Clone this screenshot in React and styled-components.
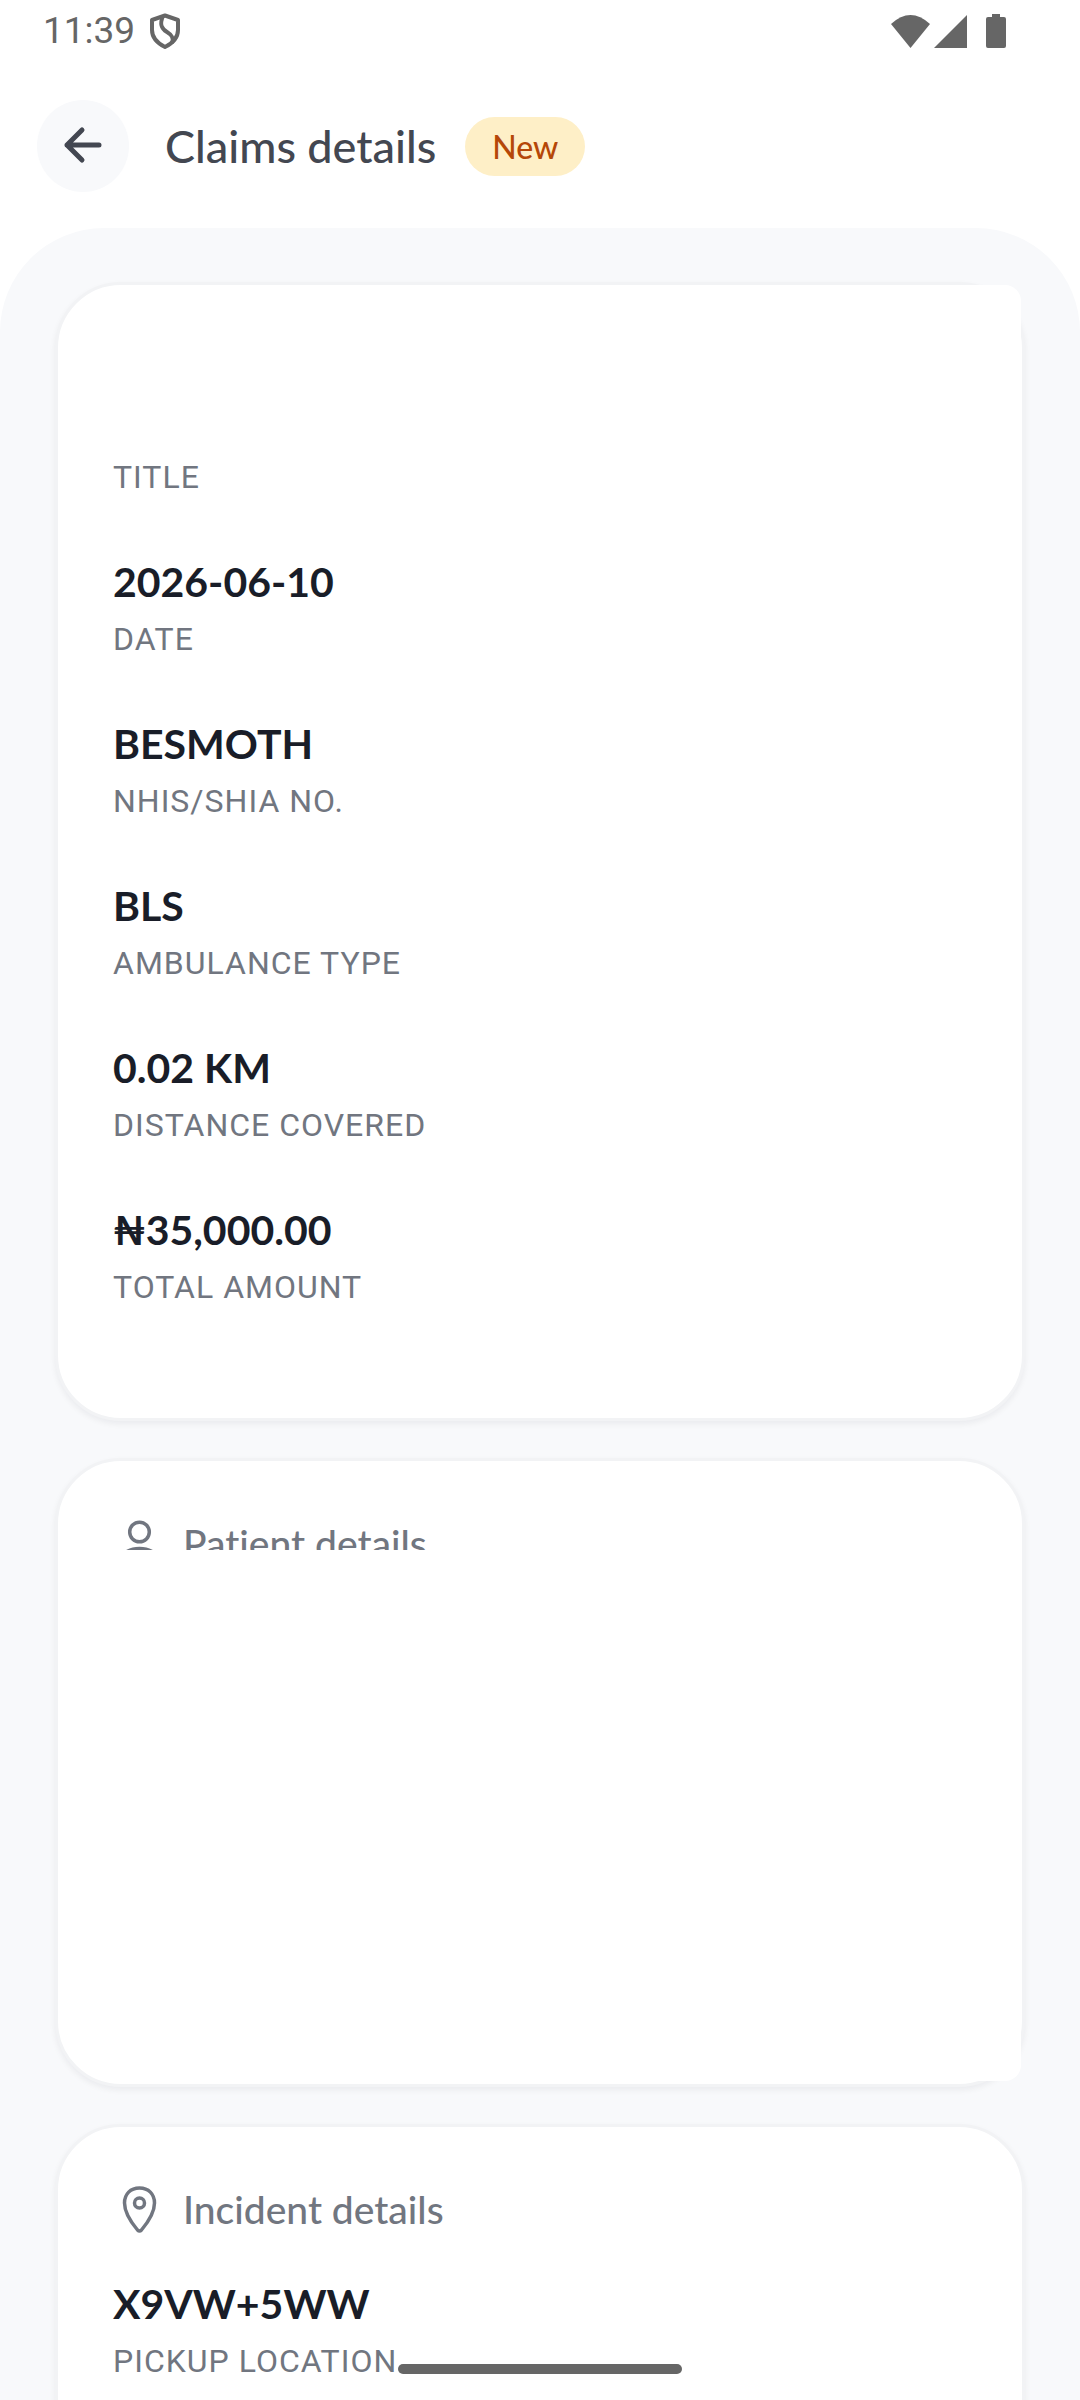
import React from 'react'
import styled, { createGlobalStyle, ThemeProvider } from 'styled-components'

const theme = {
  colors: {
    surface: '#ffffff',
    page: '#f8f9fb',
    border: '#f2f3f5',
    heading: '#434751',
    value: '#191d28',
    label: '#717680',
    system: '#666666',
    badge: '#feefc7',
    badgeText: '#b54708',
  },
  fonts: {
    brand: 'Lato, "Open Sans", sans-serif',
    body: 'Roboto, "Liberation Sans", sans-serif',
  },
}

const GlobalStyle = createGlobalStyle`
  * {
    box-sizing: border-box;
  }
  body {
    margin: 0;
    background-color: ${theme.colors.surface};
    font-family: ${theme.fonts.body};
    font-variant-ligatures: none;
  }
`
const Screen = styled.div`
  display: flex;
  flex-direction: column;
  height: 100vh;
  overflow: hidden;
`
const StatusBar = styled.div`
  display: flex;
  flex: none;
  align-items: center;
  height: 64px;
  padding: 0 74px 2px 43px;
  color: ${(props) => props.theme.colors.system};
  font-size: 37px;
  line-height: 62px;

  svg {
    display: block;
    fill: currentColor;
  }
`
const Clock = styled.time`
  margin-right: 14px;
`
const StatusIcons = styled.div`
  display: flex;
  align-items: center;
  margin-left: auto;
  gap: 4px;
`
const Header = styled.header`
  display: flex;
  flex: none;
  align-items: center;
  height: 164px;
  padding: 0 37px;
`
const BackButton = styled.button`
  display: grid;
  place-items: center;
  width: 92px;
  height: 92px;
  margin-right: 36px;
  padding: 0;
  border: 0;
  border-radius: 50%;
  background-color: ${(props) => props.theme.colors.page};
  color: ${(props) => props.theme.colors.heading};
  cursor: pointer;
`
const Title = styled.h1`
  margin: 0 29px 0 0;
  color: ${(props) => props.theme.colors.heading};
  font-family: ${(props) => props.theme.fonts.brand};
  font-size: 45px;
  font-weight: 500;
  line-height: 60px;
`
const Badge = styled.span`
  padding: 0 27px;
  border-radius: 30px;
  background-color: ${(props) => props.theme.colors.badge};
  color: ${(props) => props.theme.colors.badgeText};
  font-family: ${(props) => props.theme.fonts.brand};
  font-size: 32px;
  font-weight: 500;
  line-height: 59px;
`
const Content = styled.main`
  display: flex;
  flex: 1;
  flex-direction: column;
  gap: 37px;
  min-height: 0;
  padding: 54px 55px 0;
  border-radius: 104px 104px 0 0;
  background-color: ${(props) => props.theme.colors.page};
  overflow: hidden;
`
const Card = styled.section`
  position: relative;
  flex: none;
  padding: ${(props) => (props.$summary ? '168px' : '55px')} 55px
    ${(props) => (props.$roomy ? '107px' : '55px')};
  border: 3px solid ${(props) => props.theme.colors.border};
  border-radius: 66px;
  background-color: ${(props) => props.theme.colors.surface};
  box-shadow: 0 3px 6px rgba(16, 24, 40, 0.06);
`
// White sheet that pokes out over one rounded corner of its card
const Cover = styled.div`
  position: absolute;
  right: 1px;
  width: 240px;
  height: 60px;
  background-color: ${(props) => props.theme.colors.surface};
  ${(props) =>
    props.$corner === 'top'
      ? 'top: 0; border-top-right-radius: 16px;'
      : 'bottom: 3px; border-bottom-right-radius: 16px;'}
`
const Details = styled.dl`
  display: flex;
  flex-direction: column;
  gap: 48px;
  margin: 0;
`
const Detail = styled.div`
  display: flex;
  flex-direction: column-reverse;
`
const Label = styled.dt`
  color: ${(props) => props.theme.colors.label};
  font-size: 32px;
  letter-spacing: 1px;
  line-height: 48px;
  text-transform: uppercase;
`
const Value = styled.dd`
  margin: 0;
  color: ${(props) => props.theme.colors.value};
  font-family: ${(props) => props.theme.fonts.brand};
  font-size: 41px;
  font-weight: 700;
  line-height: 66px;
`
const SectionTitle = styled.h2`
  display: flex;
  align-items: center;
  gap: 18px;
  margin: 0 0 34px;
  color: ${(props) => props.theme.colors.label};
  font-family: ${(props) => props.theme.fonts.brand};
  font-size: 39px;
  font-weight: 500;
  line-height: 55px;

  svg {
    flex: none;
    fill: none;
    stroke: currentColor;
  }
`
const Clip = styled.div`
  height: 34px;
  margin-bottom: 479px;
  overflow: hidden;
`
const HomeIndicator = styled.div`
  position: fixed;
  bottom: 26px;
  left: 50%;
  width: 284px;
  height: 10px;
  border-radius: 5px;
  background-color: ${(props) => props.theme.colors.system};
  transform: translateX(-50%);
`

function ShieldIcon() {
  return (
    <svg width="32" height="38" viewBox="0 0 32 38" aria-hidden="true">
      <path
        d="M16 3.500 29 8v10c0 8-6 13.500-13 17-7-3.500-13-9-13-17V8z"
        fill="none"
        stroke="currentColor"
        strokeWidth="4"
        strokeLinejoin="round"
      />
      <path
        d="M14 4c-4 9-1 13 4 16s7 6 5 11"
        fill="none"
        stroke="currentColor"
        strokeWidth="4"
      />
    </svg>
  )
}

function ArrowIcon() {
  return (
    <svg width="44" height="44" viewBox="0 0 44 44" aria-hidden="true">
      <path
        d="M38 21H6M21 6 6 21l15 15"
        fill="none"
        stroke="currentColor"
        strokeWidth="5"
        strokeLinecap="round"
        strokeLinejoin="round"
      />
    </svg>
  )
}

function PersonIcon() {
  return (
    <svg
      width="52"
      height="52"
      viewBox="0 0 52 52"
      strokeWidth="3.5"
      aria-hidden="true"
    >
      <circle cx="26.500" cy="14" r="9.800" />
      <ellipse cx="26.500" cy="40" rx="17" ry="9.500" />
    </svg>
  )
}

function PinIcon() {
  return (
    <svg
      width="52"
      height="52"
      viewBox="0 0 52 52"
      strokeWidth="3.5"
      aria-hidden="true"
    >
      <path d="M26.500 4c-9 0-15 6-15 15 0 10 8 21 13 27q2 2 4 0c5-6 13-17 13-27 0-9-6-15-15-15z" />
      <circle cx="26.500" cy="19" r="5" />
    </svg>
  )
}

const summary = [
  ['Title', ''],
  ['Date', '2026-06-10'],
  ['NHIS/SHIA No.', 'BESMOTH'],
  ['Ambulance type', 'BLS'],
  ['Distance covered', '0.02 KM'],
  ['Total amount', '₦35,000.00'],
]

const incident = [['Pickup location', 'X9VW+5WW']]

function DetailList({ items }) {
  return (
    <Details>
      {items.map(([label, value]) => (
        <Detail key={label}>
          <Label>{label}</Label>
          {value && <Value>{value}</Value>}
        </Detail>
      ))}
    </Details>
  )
}

function App() {
  return (
    <ThemeProvider theme={theme}>
      <GlobalStyle />
      <Screen>
        <StatusBar>
          <Clock>11:39</Clock>
          <ShieldIcon />
          <StatusIcons>
            <svg width="39" height="33" viewBox="0 0 39 33" aria-hidden="true">
              <path d="M0 9Q19.500-9 39 9L19.500 33z" />
            </svg>
            <svg width="33" height="33" viewBox="0 0 33 33" aria-hidden="true">
              <path d="M33 0v33H0z" />
            </svg>
            <svg width="35" height="34" viewBox="0 0 35 34" aria-hidden="true">
              <path d="M21 0h8v3h4q2 0 2 2v27q0 2-2 2H17q-2 0-2-2V5q0-2 2-2h4z" />
            </svg>
          </StatusIcons>
        </StatusBar>
        <Header>
          <BackButton type="button" aria-label="Back">
            <ArrowIcon />
          </BackButton>
          <Title>Claims details</Title>
          <Badge>New</Badge>
        </Header>
        <Content>
          <Card $summary $roomy>
            <Cover $corner="top" />
            <DetailList items={summary} />
          </Card>
          <Card>
            <Clip>
              <SectionTitle>
                <PersonIcon />
                Patient details
              </SectionTitle>
            </Clip>
            <Cover $corner="bottom" />
          </Card>
          <Card $roomy>
            <SectionTitle>
              <PinIcon />
              Incident details
            </SectionTitle>
            <DetailList items={incident} />
          </Card>
        </Content>
      </Screen>
      <HomeIndicator />
    </ThemeProvider>
  )
}

export default App
